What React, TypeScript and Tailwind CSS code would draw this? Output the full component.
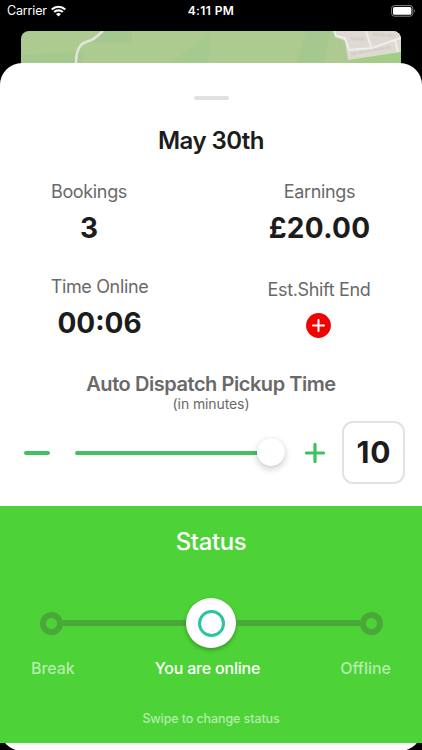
import type { ReactNode } from 'react';

function StatusBar() {
  return (
    <header className="grid h-[31px] grid-cols-3 items-start pt-[3px] text-white">
      <div className="flex h-4 items-center gap-[4px] pl-[7px]">
        <span className="text-[12.5px] leading-4 tracking-[-0.15px]">Carrier</span>
        <svg width="15" height="12" viewBox="0 0 15 12" className="-mt-px" fill="none" stroke="white" strokeWidth="2.1">
          <path d="M.7 4.5a9.6 9.6 0 0 1 13.6 0" />
          <path d="M3.2 7.1a6.1 6.1 0 0 1 8.6 0" />
          <path d="M7.5 11.6 5 9.1a3.6 3.6 0 0 1 5 0Z" fill="white" stroke="none" />
        </svg>
      </div>
      <div className="text-center text-[12px] font-semibold leading-4 tracking-[0.4px]">4:11 PM</div>
      <div className="flex h-4 items-center justify-end pr-[6px]">
        <svg width="25" height="12" viewBox="0 0 25 12">
          <rect x=".6" y=".6" width="21.2" height="10.6" rx="2.8" fill="none" stroke="#858585" strokeWidth="1" />
          <rect x="2" y="2" width="18.4" height="7.8" rx="1.5" fill="white" />
          <path d="M23.2 4.2c1.2.5 1.2 2.9 0 3.4Z" fill="#858585" />
        </svg>
      </div>
    </header>
  );
}

function MapStrip() {
  return (
    <div className="mx-[21px] h-[60px] overflow-hidden rounded-t-[8px] bg-[#adcb91]">
      <svg width="380" height="60" viewBox="0 0 380 60">
        <path d="M0 24 63 21 58 60H0Z" fill="#a5c88e" />
        <path d="M82 0h29v11l-34 1H63Z" fill="#a5c88e" />
        <path d="M190 0 150 32v28h34Z" fill="#a6c98f" />
        <path d="M285 0h25L300 46h-29Z" fill="#a5c88e" />
        <path d="m328 29 52-10v30h-50Z" fill="#a3cd87" />
        <path d="M324 0h56v21l-53 8-3-19-10-4V0Z" fill="#dedad1" />
        <path d="M330 8h15M352 3l22 2M330 23l40-7" fill="none" stroke="#d3cfc9" strokeWidth="3" strokeDasharray="6 1" />
        <path d="m313 0 2 5 9 2 4 12 23-2 29-10M345 0l5 16M374 9l3 12" fill="none" stroke="#eeedef" strokeWidth="2" />
        <path d="m317 10 10 25" fill="none" stroke="#b3c3a0" strokeWidth="1.2" />
        <path d="M82 0C73 8 72 9 65 11c-7 2-10 11-10 22" fill="none" stroke="#e2e5df" strokeWidth="2.6" />
      </svg>
    </div>
  );
}

function Stat({ label, children, className }: { label: string; children: ReactNode; className: string }) {
  return (
    <div className={`flex flex-col items-center ${className}`}>
      <div className="whitespace-nowrap text-[18px] leading-6 tracking-[-0.35px] text-[#696969]">{label}</div>
      {children}
    </div>
  );
}

const value = 'mb-px mt-2 text-[28px] font-bold leading-8 text-[#1c1c1c]';

function PickupTime() {
  return (
    <section>
      <h2 className="mt-[33px] text-center text-[20px] font-semibold leading-[22px] tracking-[-0.45px] text-[#696969]">
        Auto Dispatch Pickup Time
      </h2>
      <p className="text-center text-[14px] leading-[18px] tracking-[-0.1px] text-[#696969]">(in minutes)</p>
      <div className="mt-2 flex h-[63px] items-center pl-[24px] pr-[17px]">
        <button className="h-1 w-[26px] rounded-full bg-[#3fc15f]" aria-label="Less" />
        <div className="ml-[25px] flex w-[210px] items-center">
          <div className="mt-px h-1 grow rounded-l-full bg-[#43c063]" />
          <div className="-mt-px size-7 rounded-full bg-white shadow-[0_3px_7px_rgba(0,0,0,0.2),0_0_1px_rgba(0,0,0,0.15)]" />
        </div>
        <button className="ml-[19px]" aria-label="More">
          <svg width="22" height="22" viewBox="0 0 22 22" fill="none" stroke="#3fc15f" strokeWidth="3.2" strokeLinecap="round">
            <path d="M2.4 11h17.2M11 2.4v17.2" />
          </svg>
        </button>
        <div className="ml-auto flex h-[63px] w-[63px] items-center justify-center rounded-[11px] border-2 border-[#e2e2e2] pl-px text-[30px] font-bold tracking-[0.8px] text-[#1c1c1c]">
          10
        </div>
      </div>
    </section>
  );
}

function StatusPanel() {
  return (
    <section className="mt-[22px] flex h-[237px] flex-col bg-[#4dd338] text-white">
      <h2 className="mt-5 text-center text-[24px] font-medium leading-8 tracking-[-0.4px]">Status</h2>
      <div className="mt-[40px] flex h-[50px] items-center px-[39.5px]">
        <span className="size-[23px] rounded-full border-[6px] border-[#49a838]" />
        <span className="h-[6px] grow bg-[#49a838]" />
        <span className="flex size-[50px] items-center justify-center rounded-full bg-white shadow-[0_2px_4px_rgba(0,0,0,0.3)]">
          <span className="size-[27px] rounded-full border-[3px] border-[#2bc5a0]" />
        </span>
        <span className="h-[6px] grow bg-[#49a838]" />
        <span className="size-[23px] rounded-full border-[6px] border-[#49a838]" />
      </div>
      <div className="mt-2 grid grid-cols-[1fr_auto_1fr] items-center text-[16px] font-medium leading-6">
        <span className="pl-[31px] tracking-[-0.1px] text-[#b3edab]">Break</span>
        <span className="-ml-[7px] tracking-[-0.2px]">You are online</span>
        <span className="pr-[31px] text-right text-[#b3edab]">Offline</span>
      </div>
      <p className="mt-[29px] text-center text-[12.5px] font-medium leading-5 tracking-[-0.1px] text-[#b3edab]">Swipe to change status</p>
    </section>
  );
}

export default function App() {
  return (
    <main className="h-[750px] w-[422px] overflow-hidden bg-black font-['Inter','Noto_Sans',sans-serif]">
      <StatusBar />
      <MapStrip />
      <div className="relative -mt-[28px] h-[688px] rounded-[22px] bg-white pt-[33px]">
        <div className="mx-auto h-1 w-[35px] rounded-full bg-[#e1e1e1]" />
        <h1 className="mt-[25px] text-center text-[24px] font-semibold leading-8 tracking-[-0.55px] text-[#1c1c1c]">May 30th</h1>
        <div className="mt-[23px] flex justify-between pl-[51px] pr-[51px]">
          <Stat label="Bookings" className="w-[76px]">
            <div className={value}>3</div>
          </Stat>
          <Stat label="Earnings" className="w-[103px]">
            <div className={`${value} tracking-[0.3px]`}>£20.00</div>
          </Stat>
        </div>
        <div className="mt-[30px] flex justify-between pl-[51px] pr-[51px]">
          <Stat label="Time Online" className="w-[97px]">
            <div className={value}>00:06</div>
          </Stat>
          <Stat label="Est.Shift End" className="w-[104px] pt-[3px]">
            <button className="-ml-px mt-[11px]" aria-label="Set shift end">
              <svg width="25" height="25" viewBox="0 0 25 25">
                <circle cx="12.5" cy="12.5" r="12.4" fill="#ee0202" />
                <path d="M12.5 7v11M7 12.5h11" stroke="white" strokeWidth="2" strokeLinecap="round" />
              </svg>
            </button>
          </Stat>
        </div>
        <PickupTime />
        <StatusPanel />
      </div>
    </main>
  );
}
